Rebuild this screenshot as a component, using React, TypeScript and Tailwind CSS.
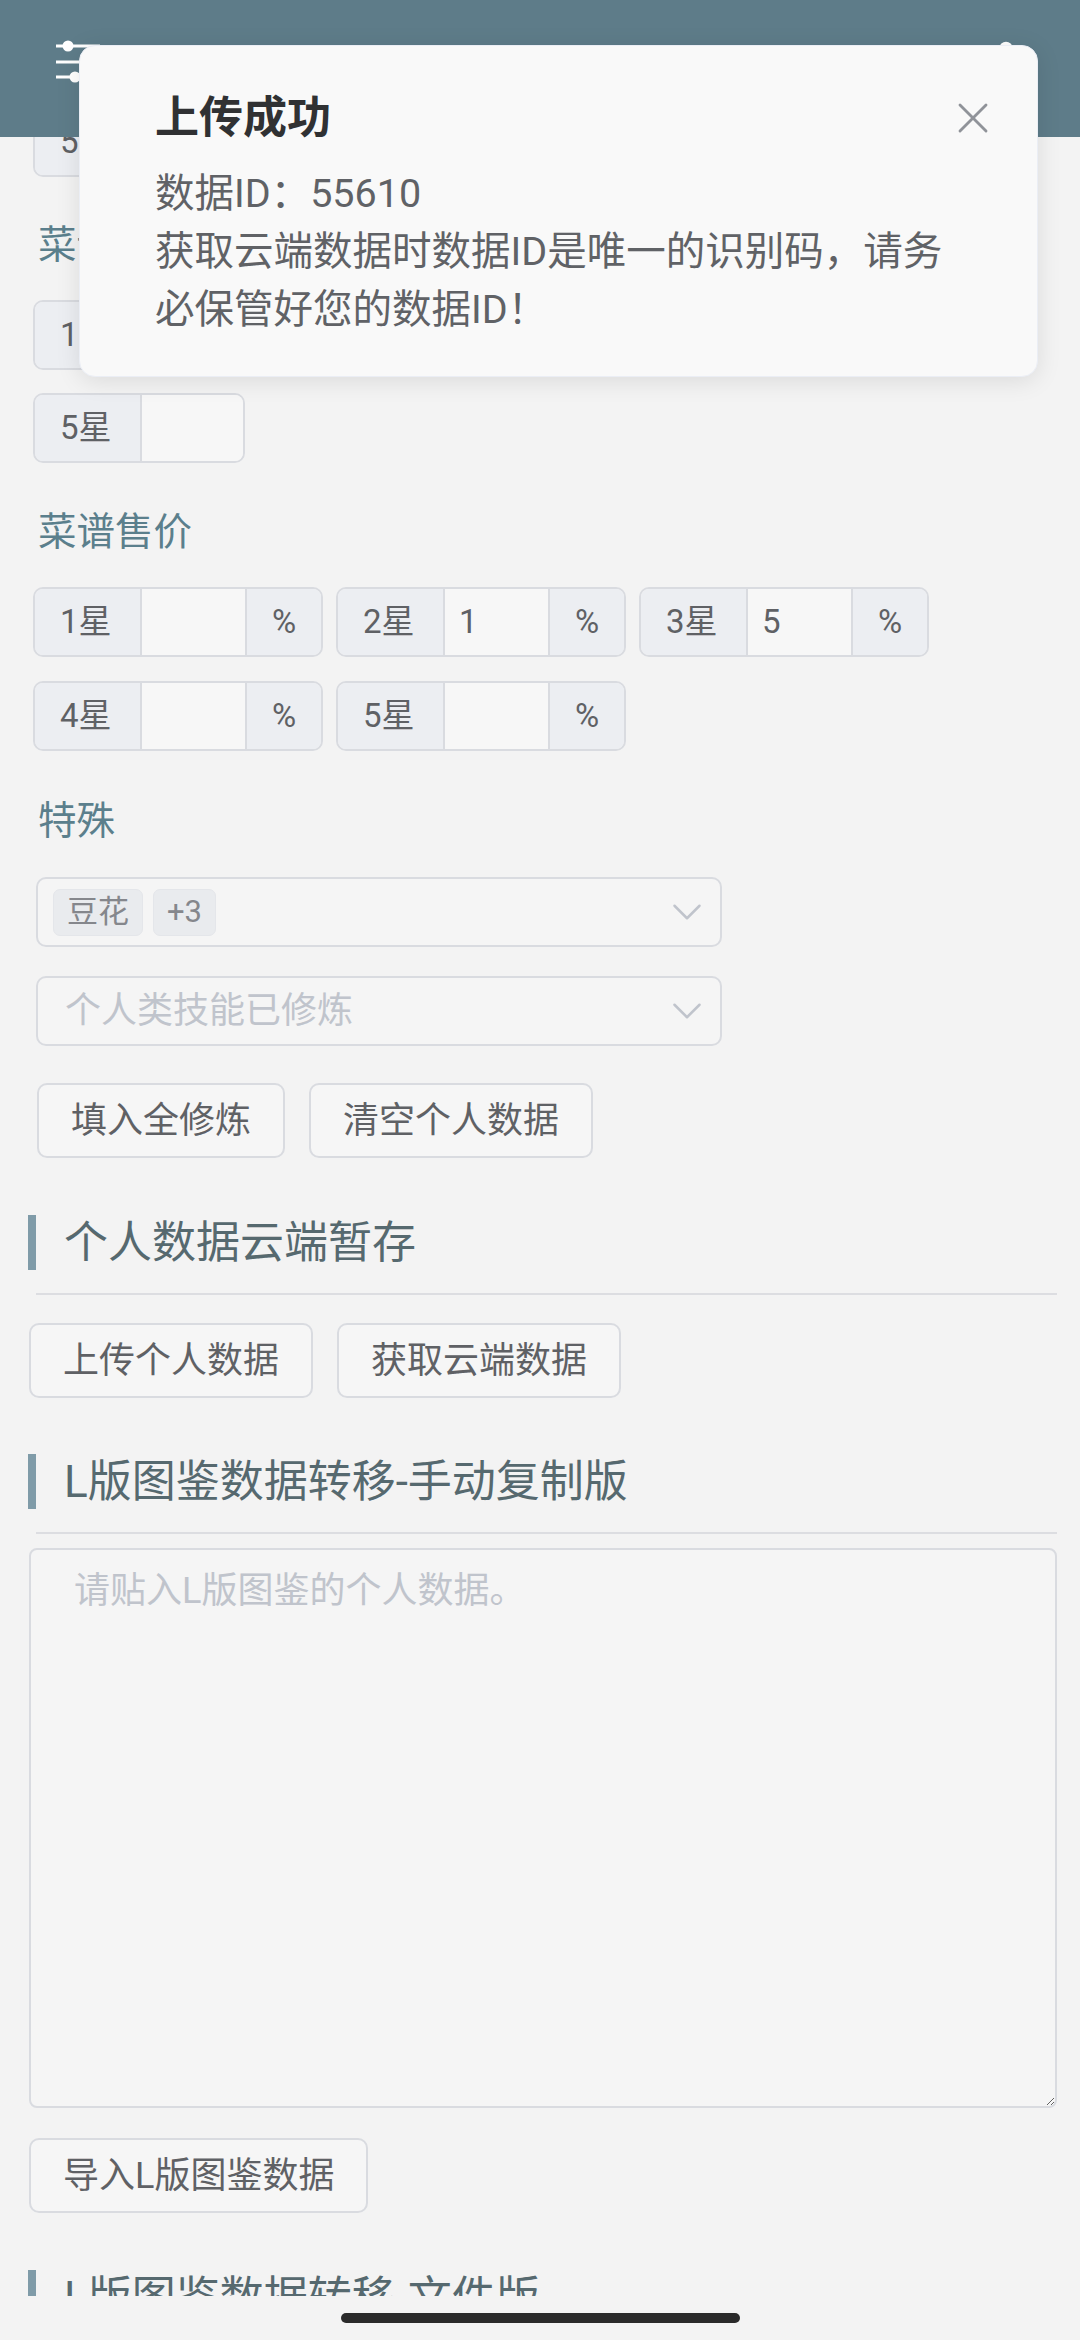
import { FC } from "react";
import { ChevronDown, Settings, X } from "lucide-react";

type StarProps = {
  star: number;
  value?: string;
  pct?: boolean;
};

const StarInput: FC<StarProps> = ({ star, value, pct }) => {
  return (
    <div
      className={`flex h-[70px] rounded-[10px] border-2 border-[#d9dbe0] overflow-hidden text-[33px] text-[#5f6165] ${
        pct ? "w-[290px]" : "w-[212px]"
      }`}
    >
      <div className="w-[107px] shrink-0 bg-[#eceef2] border-r-2 border-[#d9dbe0] flex items-center pl-[25px]">
        {star}星
      </div>
      <div
        className={`shrink-0 bg-[#f7f7f7] flex items-center pl-[14px] ${
          pct ? "w-[103px]" : "w-[101px]"
        }`}
      >
        {value}
      </div>
      {pct ? (
        <div className="flex-1 bg-[#eceef2] border-l-2 border-[#d9dbe0] flex items-center justify-center">
          %
        </div>
      ) : null}
    </div>
  );
};

const Label: FC<{ text: string; className?: string }> = ({ text, className }) => (
  <div
    className={`h-[58px] leading-[58px] ml-[10px] text-[38.5px] text-[#5b7f8c] ${className ?? ""}`}
  >
    {text}
  </div>
);

const Btn: FC<{ text: string }> = ({ text }) => (
  <button
    type="button"
    className="h-[75px] px-[32px] border-2 border-[#d9dbe0] rounded-[10px] bg-[#f6f6f6] text-[36px] text-[#5f6165] leading-none"
  >
    {text}
  </button>
);

const SectionTitle: FC<{ text: string; className?: string }> = ({ text, className }) => (
  <div className={className}>
    <div className="flex items-center h-[55px]">
      <div className="w-[8px] h-[55px] bg-[#7f9ba8]"></div>
      <div className="ml-[28px] text-[44px] leading-none text-[#56696f]">{text}</div>
    </div>
    <div className="ml-[8px] mt-[23px] h-[2px] bg-[#dcdde1]"></div>
  </div>
);

const App: FC = () => {
  return (
    <div className="relative w-[1080px] h-[2340px] overflow-hidden bg-[#f3f3f3] font-[Roboto,'Noto_Sans_CJK_SC',sans-serif]">
      <header className="h-[137px] bg-[#5e7c89] flex items-start justify-between pl-[56px] pr-[50px] pt-[40px]">
        <svg width="44" height="44" viewBox="0 0 44 44" fill="none">
          <line x1="0" y1="6" x2="44" y2="6" stroke="white" strokeWidth="3" />
          <line x1="0" y1="22" x2="44" y2="22" stroke="white" strokeWidth="3" />
          <line x1="0" y1="37" x2="44" y2="37" stroke="white" strokeWidth="3" />
          <circle cx="12" cy="6" r="5.5" fill="white" />
          <circle cx="32" cy="22" r="5.5" fill="white" />
          <circle cx="19" cy="37" r="5.5" fill="white" />
        </svg>
        <Settings size={48} color="white" strokeWidth={2.2} />
      </header>

      <main className="h-[2159px] overflow-hidden pl-[28px] pr-[23px]">
        <div className="ml-[5px] -mt-[30px]">
          <StarInput star={5} />
        </div>

        <Label text="菜谱经验" className="mt-[39px]" />
        <div className="ml-[5px] mt-[26px] flex flex-col gap-[23px]">
          <div className="flex gap-[13px]">
            <StarInput star={1} />
            <StarInput star={2} />
            <StarInput star={3} />
            <StarInput star={4} />
          </div>
          <div className="flex gap-[13px]">
            <StarInput star={5} />
          </div>
        </div>

        <Label text="菜谱售价" className="mt-[40px]" />
        <div className="ml-[5px] mt-[26px] flex flex-col gap-[24px]">
          <div className="flex gap-[13px]">
            <StarInput star={1} pct />
            <StarInput star={2} value="1" pct />
            <StarInput star={3} value="5" pct />
          </div>
          <div className="flex gap-[13px]">
            <StarInput star={4} pct />
            <StarInput star={5} pct />
          </div>
        </div>

        <Label text="特殊" className="mt-[41px]" />
        <div className="ml-[8px] mt-[27px] w-[686px] h-[70px] border-2 border-[#d9dbe0] rounded-[10px] bg-[#f5f5f5] flex items-center pl-[15px] pr-[8px]">
          <div className="flex gap-[10px] flex-1">
            <span className="h-[47px] px-[13px] rounded-[7px] bg-[#e9ebee] border border-[#e4e6ea] text-[31px] text-[#85878c] flex items-center">
              豆花
            </span>
            <span className="h-[47px] px-[13px] rounded-[7px] bg-[#e9ebee] border border-[#e4e6ea] text-[31px] text-[#85878c] flex items-center">
              +3
            </span>
          </div>
          <ChevronDown size={50} color="#c0c4cc" strokeWidth={1.2} />
        </div>
        <div className="ml-[8px] mt-[29px] w-[686px] h-[70px] border-2 border-[#d9dbe0] rounded-[10px] bg-[#f5f5f5] flex items-center pl-[27px] pr-[8px]">
          <div className="flex-1 text-[36px] text-[#c0c4cc]">个人类技能已修炼</div>
          <ChevronDown size={50} color="#c0c4cc" strokeWidth={1.2} />
        </div>

        <div className="ml-[9px] mt-[37px] flex gap-[24px]">
          <Btn text="填入全修炼" />
          <Btn text="清空个人数据" />
        </div>

        <SectionTitle text="个人数据云端暂存" className="mt-[57px]" />
        <div className="ml-[1px] mt-[28px] flex gap-[24px]">
          <Btn text="上传个人数据" />
          <Btn text="获取云端数据" />
        </div>

        <SectionTitle text="L版图鉴数据转移-手动复制版" className="mt-[56px]" />
        <textarea
          className="block ml-[1px] mt-[14px] w-[1028px] h-[560px] border-2 border-[#d9dbe0] rounded-[8px] bg-[#f5f5f5] pt-[14px] pl-[43px] pr-[20px] text-[36px] leading-[54px] text-[#5f6165] placeholder:text-[#c0c4cc] outline-none"
          placeholder="请贴入L版图鉴的个人数据。"
        />
        <div className="ml-[1px] mt-[30px]">
          <Btn text="导入L版图鉴数据" />
        </div>

        <SectionTitle text="L版图鉴数据转移-文件版" className="mt-[57px]" />
      </main>

      <div className="h-[44px] pt-[17px]">
        <div className="mx-auto w-[399px] h-[10px] rounded-full bg-[#2a2a2a]"></div>
      </div>

      <div className="absolute left-[79px] top-[45px] w-[959px] rounded-[16px] border border-[#ebeef5] bg-[#f9f9f9] shadow-[0_4px_24px_rgba(0,0,0,0.1)] pl-[75px] pr-[51px] pt-[39px] pb-[37px] flex">
        <div className="flex-1">
          <div className="h-[66px] leading-[66px] text-[44px] font-bold text-[#303133]">上传成功</div>
          <div className="mt-[14px] text-[39.5px] leading-[58px] text-[#606266]">
            <p>数据ID：55610</p>
            <p>获取云端数据时数据ID是唯一的识别码，请务必保管好您的数据ID！</p>
          </div>
        </div>
        <div className="ml-[5px] w-[26px] h-[66px] flex items-center justify-center">
          <X size={52} color="#909399" strokeWidth={1.3} className="shrink-0" />
        </div>
      </div>
    </div>
  );
};

export default App;
